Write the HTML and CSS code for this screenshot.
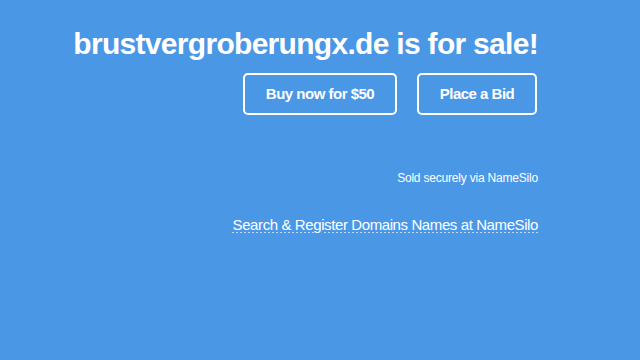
FILE: index.html
```html
<!DOCTYPE html>
<html lang="en">
<head>
    <meta charset="UTF-8">
    <meta name="viewport" content="width=device-width, initial-scale=1.0">
    <title>brustvergroberungx.de is for sale!</title>
    <link rel="stylesheet" href="styles.css">
</head>
<body>
    <div class="container">
        <h1>brustvergroberungx.de is for sale!</h1>
        <div class="actions">
            <a class="btn btn-buy" href="#">Buy now for $50</a>
            <a class="btn btn-bid" href="#">Place a Bid</a>
        </div>
        <p class="secure">Sold securely via NameSilo</p>
        <p class="register"><a href="#">Search &amp; Register Domains Names at NameSilo</a></p>
    </div>
</body>
</html>
```

FILE: styles.css
```css
body {
    font-family: "Liberation Sans", Arial, sans-serif;
    background-color: #4a97e6;
    color: #fff;
    margin: 0;
    padding: 0;
}
.container {
    padding: 0 102px 0 0;
    text-align: right;
}
h1 {
    font-size: 30px;
    font-weight: bold;
    letter-spacing: -0.7px;
    margin: 0;
    padding-top: 27px;
    line-height: 34px;
}
.actions {
    display: flex;
    justify-content: flex-end;
    gap: 20px;
    margin-top: 12px;
    padding-right: 1px;
}
.btn {
    display: block;
    box-sizing: border-box;
    height: 42px;
    line-height: 38px;
    border: 2px solid #fff;
    border-radius: 5px;
    color: #fff;
    text-decoration: none;
    text-align: center;
    white-space: nowrap;
    font-size: 15px;
    font-weight: bold;
    letter-spacing: -0.5px;
}
.btn-buy {
    width: 154px;
}
.btn-bid {
    width: 120px;
}
.secure {
    font-size: 12px;
    letter-spacing: -0.2px;
    margin: 56px 0 0;
}
.register {
    margin: 31px 0 0;
    font-size: 15px;
    letter-spacing: -0.4px;
}
.register a {
    color: #fff;
    text-decoration: underline dotted rgba(255, 255, 255, 0.85);
    text-underline-offset: 3px;
}
```
